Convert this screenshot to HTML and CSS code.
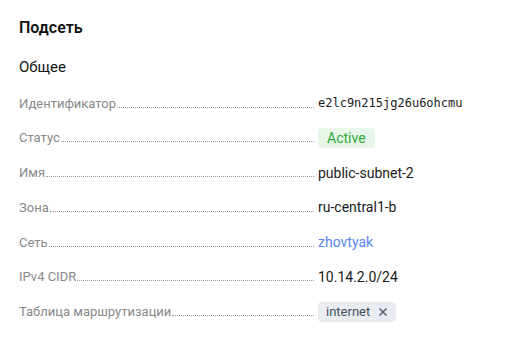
FILE: index.html
```html
<!DOCTYPE html>
<html lang="ru">
<head>
  <meta charset="UTF-8" />
  <title>Подсеть</title>
  <link rel="stylesheet" href="styles.css">
</head>
<body>
  <div class="page">
    <h1 class="page-title">Подсеть</h1>
    <h2 class="section-title">Общее</h2>
    <div class="props">
      <div class="prop">
        <div class="prop-name"><span>Идентификатор</span></div>
        <div class="prop-value mono">e2lc9n215jg26u6ohcmu</div>
      </div>
      <div class="prop">
        <div class="prop-name"><span>Статус</span></div>
        <div class="prop-value"><span class="status">Active</span></div>
      </div>
      <div class="prop">
        <div class="prop-name"><span>Имя</span></div>
        <div class="prop-value">public-subnet-2</div>
      </div>
      <div class="prop">
        <div class="prop-name"><span>Зона</span></div>
        <div class="prop-value">ru-central1-b</div>
      </div>
      <div class="prop">
        <div class="prop-name"><span>Сеть</span></div>
        <div class="prop-value"><a href="#" class="link">zhovtyak</a></div>
      </div>
      <div class="prop">
        <div class="prop-name"><span>IPv4 CIDR</span></div>
        <div class="prop-value">10.14.2.0/24</div>
      </div>
      <div class="prop">
        <div class="prop-name"><span>Таблица маршрутизации</span></div>
        <div class="prop-value">
          <span class="tag">internet
            <svg viewBox="0 0 10 10" class="tag-close">
              <path d="M1.5 1.5l7 7M8.5 1.5l-7 7" />
            </svg>
          </span>
        </div>
      </div>
    </div>
  </div>
</body>
</html>
```

FILE: styles.css
```css
body {
  margin: 0;
  background: #fff;
  color: #000;
  font-family: Roboto, "Noto Sans", sans-serif;
}
.page {
  padding: 17px 19px;
}
.page-title {
  margin: 0;
  font-size: 16px;
  font-weight: 600;
  line-height: 22px;
  color: #111;
}
.section-title {
  margin: 17px 0 0;
  font-size: 15px;
  font-weight: 400;
  line-height: 22px;
  color: #111;
}
.props {
  margin-top: 15px;
  display: flex;
  flex-direction: column;
  gap: 14.8px;
}
.prop {
  display: flex;
  align-items: center;
  height: 20px;
}
.prop-name {
  width: 295px;
  flex: none;
  display: flex;
  align-items: baseline;
  font-size: 13px;
  color: #888;
}
.prop-name::after {
  content: "";
  flex: 1;
  border-bottom: 1px dotted #999;
  margin-left: 1px;
}
.prop-value {
  margin-left: 4px;
  font-size: 14px;
  color: #1a1a1a;
}
.mono {
  font-family: "DejaVu Sans Mono", monospace;
  font-size: 12px;
}
.link {
  color: #5b86f5;
  text-decoration: none;
}
.status {
  display: inline-block;
  background: #e8f7e9;
  color: #2ea83a;
  padding: 0 9px;
  height: 20px;
  line-height: 20px;
  border-radius: 4px;
  font-size: 14px;
}
.tag {
  display: inline-flex;
  align-items: center;
  gap: 8px;
  background: #e9edf1;
  color: #445060;
  padding: 0 8px;
  height: 20px;
  border-radius: 4px;
  font-size: 13px;
}
.tag-close {
  width: 10px;
  height: 10px;
  stroke: #556273;
  stroke-width: 1.5;
  fill: none;
}
```
